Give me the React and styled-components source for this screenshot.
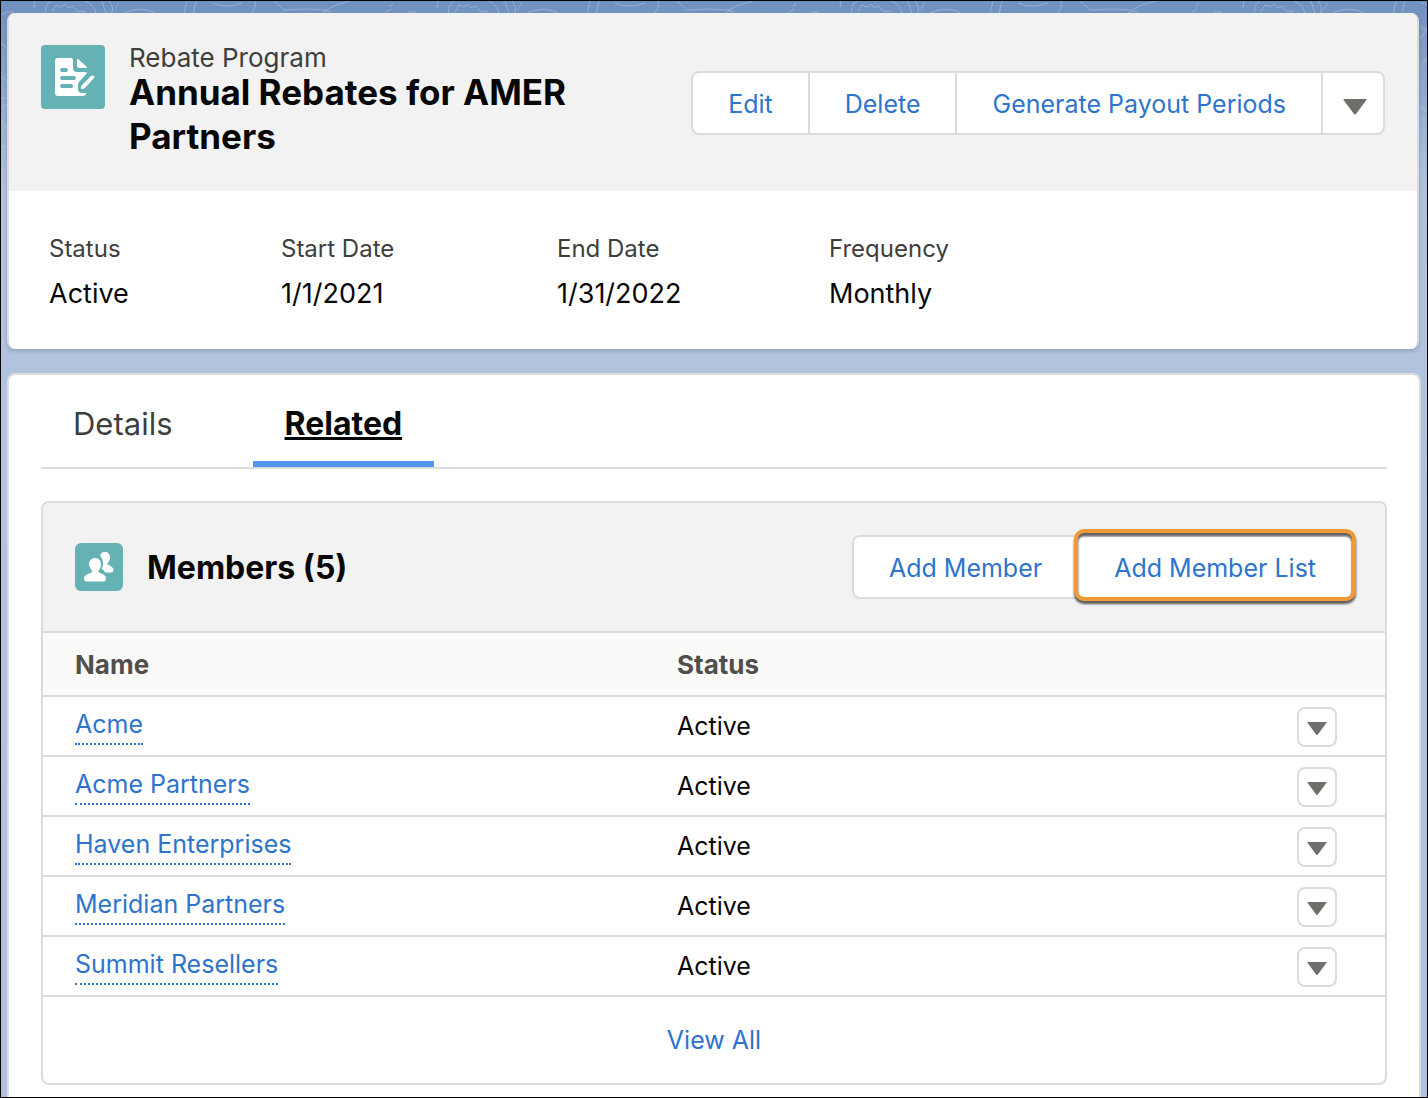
import { useState } from "react";
import styled, { createGlobalStyle, css } from "styled-components";

const GlobalStyle = createGlobalStyle`
  *,
  *::before,
  *::after {
    box-sizing: border-box;
  }

  body {
    margin: 0;
    font-family: Inter, "Liberation Sans", sans-serif;
    font-size: 25px;
    color: #080707;
  }

  button {
    font: inherit;
    cursor: pointer;
  }
`;

const Page = styled.div`
  position: relative;
  height: 100vh;
  overflow: hidden;
  padding: 12px 6px 0;
  border: 1px solid #000;
  background: linear-gradient(#6f91bf, #b0c1df 180px, #b2c3de 300px, #b0c0de);
`;

const Backdrop = styled.svg`
  position: absolute;
  top: 0;
  left: 0;
  width: 100%;
  height: 360px;
`;

const RecordCard = styled.section`
  position: relative;
  margin: 0 2px 24px 0;
  border: solid #dddbda;
  border-width: 0 2px;
  border-radius: 8px;
  background: #fff;
  box-shadow: 0 2px 4px rgba(0, 0, 0, 0.18);
  overflow: hidden;
`;

const RecordHeader = styled.header`
  display: flex;
  align-items: flex-start;
  justify-content: space-between;
  padding: 32px 32px 33px;
  background: #f2f2f2;
`;

const RecordHeading = styled.div`
  display: flex;
  gap: 24px;
`;

const RecordIcon = styled.svg`
  flex: none;
  width: 64px;
  height: 64px;
`;

const RecordTitle = styled.div`
  max-width: 480px;
`;

const RecordType = styled.p`
  margin: 0;
  color: #3e3e3c;
  font-size: 26px;
  line-height: 25px;
`;

const RecordName = styled.h1`
  margin: 0;
  font-size: 35px;
  font-weight: 700;
  line-height: 44px;
`;

const ButtonGroup = styled.div`
  display: flex;
  margin-top: ${(props) => (props.$offset ? "26px" : "0")};
`;

const Button = styled.button`
  height: 64px;
  padding: 2px 35px 0;
  border: 2px solid #dddbda;
  background: #fff;
  color: #2e74cc;
  white-space: nowrap;

  & + & {
    margin-left: -2px;
  }

  &:first-child {
    border-radius: 8px 0 0 8px;
  }

  &:last-child {
    border-radius: 0 8px 8px 0;
  }

  ${(props) =>
    props.$highlighted &&
    css`
      position: relative;
      border-left-color: #fff;

      &::after {
        content: "";
        position: absolute;
        inset: -8px -5px -4px;
        border: 4px solid #f19937;
        border-radius: 10px;
        filter: drop-shadow(0 3px 1px #555);
      }
    `}
`;

const MenuButton = styled(Button)`
  display: flex;
  align-items: center;
  justify-content: center;
  width: 64px;
  padding: 7px 0 0 4px;
`;

const Caret = styled.svg`
  display: block;
  width: ${(props) => props.$size}px;
  fill: #706e6b;
`;

const Fields = styled.dl`
  display: grid;
  grid-template-columns: 232px 276px 272px 1fr;
  margin: 0;
  padding: 40px 40px 36px;
`;

const FieldLabel = styled.dt`
  color: #3e3e3c;
  font-size: 24px;
  line-height: 36px;
`;

const FieldValue = styled.dd`
  margin: 8px 0 0;
  font-size: 27px;
  line-height: 38px;
`;

const DetailCard = styled.main`
  position: relative;
  min-height: 100vh;
  padding: 0 32px;
  border: 2px solid #dddbda;
  border-radius: 8px;
  background: #fff;
`;

const Tabs = styled.div`
  display: flex;
  gap: 48px;
  border-bottom: 2px solid #dddbda;
`;

const Tab = styled.button`
  height: 92px;
  padding: 10px 32px 0;
  border: solid transparent;
  border-width: 0 0 6px;
  background: none;
  color: #3e3e3c;
  font-size: 31px;

  &[aria-selected="true"] {
    border-color: #5595f2;
    color: #080707;
    font-size: 32px;
    font-weight: 700;
    text-decoration: underline;
  }
`;

const RelatedList = styled.section`
  margin-top: 32px;
  border: 2px solid #dddbda;
  border-radius: 8px;
  overflow: hidden;
`;

const ListHeader = styled.header`
  display: flex;
  align-items: center;
  padding: 32px;
  background: #f2f2f2;
`;

const ListIcon = styled.svg`
  width: 48px;
  height: 48px;
  margin-right: 24px;
`;

const ListTitle = styled.h2`
  flex: 1;
  margin: 0;
  font-size: 32px;
  font-weight: 700;
`;

const Table = styled.table`
  width: 100%;
  border-collapse: collapse;
  table-layout: fixed;
`;

const HeadCell = styled.th`
  width: ${(props) => props.$width};
  height: 64px;
  padding: 0 0 0 32px;
  border-top: 2px solid #dddbda;
  background: #fafaf9;
  color: #514f4d;
  font-size: 26px;
  font-weight: 700;
  text-align: left;
`;

const Cell = styled.td`
  height: 60px;
  padding: 0 0 0 32px;
  border: solid #dddbda;
  border-width: 2px 0;
`;

const LinkCell = styled(Cell)`
  padding-bottom: 2px;
`;

const ActionCell = styled(Cell)`
  padding-top: 2px;
`;

const MemberLink = styled.a`
  display: inline-block;
  border-bottom: 2px dotted #2e74cc;
  color: #2e74cc;
  line-height: 38px;
  text-decoration: none;
`;

const RowMenuButton = styled.button`
  display: flex;
  align-items: center;
  justify-content: center;
  width: 40px;
  height: 40px;
  padding: 4px 0 0;
  border: 2px solid #dddbda;
  border-radius: 8px;
  background: #fff;
`;

const ListFooter = styled.footer`
  display: flex;
  align-items: center;
  justify-content: center;
  height: 86px;
`;

const ViewAll = styled.a`
  color: #2e74cc;
  text-decoration: none;
`;

const fields = [
  { label: "Status", value: "Active" },
  { label: "Start Date", value: "1/1/2021" },
  { label: "End Date", value: "1/31/2022" },
  { label: "Frequency", value: "Monthly" },
];

const members = [
  { name: "Acme", status: "Active" },
  { name: "Acme Partners", status: "Active" },
  { name: "Haven Enterprises", status: "Active" },
  { name: "Meridian Partners", status: "Active" },
  { name: "Summit Resellers", status: "Active" },
];

const DownCaret = ({ size }) => (
  <Caret $size={size} viewBox="0 0 24 16" aria-hidden="true">
    <path d="M1 0h22q1 0 .4 1L13 15q-1 1-2 0L.6 1Q0 0 1 0z" />
  </Caret>
);

// contour lines drawn over the blue page background
const Contours = () => (
  <Backdrop aria-hidden="true">
    <defs>
      <pattern
        id="contours"
        width="403"
        height="400"
        patternUnits="userSpaceOnUse"
      >
        <g fill="none" stroke="#b7cbe5" strokeOpacity=".5">
          <path d="M34 0l-1 7M45 13q-2-9 5-13M51 11l4-7 5 2 4-3 3 4 5-2 5 6 6-1 3 6M84 0q10 4 11 13M101 0l4 13M108 0q6 7 2 13M118 2l-4 6M123 12q18-8 33 1M186 0l-3 13M195 0l-3 13M211 2q14 6 30 0M254 0q2 8-5 13M273 0l10 9q22-2 42 0l10-5 14-4M320 13q6-6 12 0M384 12l6-4M389 6l3-4" />
          <path d="M0 14q5-4 12-3M0 42q5 2 7 8M0 76q7 2 7 10M0 98l7-2M0 106l7-3M0 120q7 6 7 18M0 145q5 0 7 2M0 174q5-4 7-11M0 196l7-9M0 220l7-8M0 243l7-5" />
          <path d="M210 24q5 8 9 2M210 38q6-6 9-16M210 66q5-4 9-14M210 106q5 2 9 6M210 116q5 2 9 5M210 128l9 6M210 152l9 4M210 180l9 2M210 218l9 1" />
        </g>
      </pattern>
    </defs>
    <rect width="100%" height="100%" fill="url(#contours)" />
  </Backdrop>
);

const ProgramIcon = () => (
  <RecordIcon viewBox="0 0 64 64" aria-hidden="true">
    <rect width="64" height="64" rx="4" fill="#65b2b5" />
    <path
      fill="#fff"
      d="M17 13h13q2 0 2 2v8q0 4 4 4h8q2 0 2 1L38 37q-1 1-1 3v4q0 4 4 4h4q1 0 0 1-1 2-3 2H17q-3 0-3-3V16q0-3 3-3z"
    />
    <path fill="#fff" d="M36 14q0-1 1 0l9 8q0 1-1 1h-7q-2 0-2-2z" />
    <path
      fill="#fff"
      d="M40 44v-2q0-1 1-2l9-9q1-1 3 0 1 1 0 2l-9 10q-1 1-3 1z"
    />
    <path
      stroke="#65b2b5"
      strokeWidth="4"
      strokeLinecap="round"
      d="M21 25h4M21 33h12M21 41h9"
    />
  </RecordIcon>
);

const MembersIcon = () => (
  <ListIcon viewBox="0 0 48 48" aria-hidden="true">
    <rect width="48" height="48" rx="6" fill="#65b2b5" />
    <path
      fill="#fff"
      d="M30 9c3 0 5 2 5 5.500c0 2-1 4-2 5-1 1.500-1 2 .5 2.500 3 1.500 5 2.500 5 5 0 1.500-1 2.500-2.500 2.500h-6c-.5-2-2-3-3.500-3.500 2-3 2.500-8-1-12.500C25 11 27 9 30 9z"
    />
    <path
      fill="#fff"
      d="M20 15c4 0 6 3 6 6.500 0 2-1 4-2 5.500-1 1.500-.5 2.500 1 3 3.500 1.500 6 2.500 6 5.500 0 2-1 3-2.500 3h-17c-1.500 0-2.500-1-2.500-3 0-3 3-4 6.500-5.500 1.500-.5 2-1.500 1-3-1-1.500-2.500-3.500-2.500-5.500C14 18 16 15 20 15z"
    />
  </ListIcon>
);

const App = () => {
  const [tab, setTab] = useState("Related");

  return (
    <Page>
      <GlobalStyle />
      <Contours />
      <RecordCard>
        <RecordHeader>
          <RecordHeading>
            <ProgramIcon />
            <RecordTitle>
              <RecordType>Rebate Program</RecordType>
              <RecordName>Annual Rebates for AMER Partners</RecordName>
            </RecordTitle>
          </RecordHeading>
          <ButtonGroup $offset>
            <Button>Edit</Button>
            <Button>Delete</Button>
            <Button>Generate Payout Periods</Button>
            <MenuButton aria-label="More actions">
              <DownCaret size={24} />
            </MenuButton>
          </ButtonGroup>
        </RecordHeader>
        <Fields>
          {fields.map((field) => (
            <div key={field.label}>
              <FieldLabel>{field.label}</FieldLabel>
              <FieldValue>{field.value}</FieldValue>
            </div>
          ))}
        </Fields>
      </RecordCard>

      <DetailCard>
        <Tabs role="tablist">
          {["Details", "Related"].map((name) => (
            <Tab
              key={name}
              role="tab"
              aria-selected={tab === name}
              onClick={() => setTab(name)}
            >
              {name}
            </Tab>
          ))}
        </Tabs>

        <RelatedList>
          <ListHeader>
            <MembersIcon />
            <ListTitle>Members (5)</ListTitle>
            <ButtonGroup>
              <Button>Add Member</Button>
              <Button $highlighted>Add Member List</Button>
            </ButtonGroup>
          </ListHeader>
          <Table>
            <thead>
              <tr>
                <HeadCell $width="602px">Name</HeadCell>
                <HeadCell>Status</HeadCell>
                <HeadCell $width="120px" aria-label="Actions" />
              </tr>
            </thead>
            <tbody>
              {members.map((member) => (
                <tr key={member.name}>
                  <LinkCell>
                    <MemberLink href="#">{member.name}</MemberLink>
                  </LinkCell>
                  <Cell>{member.status}</Cell>
                  <ActionCell>
                    <RowMenuButton aria-label={`Actions for ${member.name}`}>
                      <DownCaret size={20} />
                    </RowMenuButton>
                  </ActionCell>
                </tr>
              ))}
            </tbody>
          </Table>
          <ListFooter>
            <ViewAll href="#">View All</ViewAll>
          </ListFooter>
        </RelatedList>
      </DetailCard>
    </Page>
  );
};

export default App;
